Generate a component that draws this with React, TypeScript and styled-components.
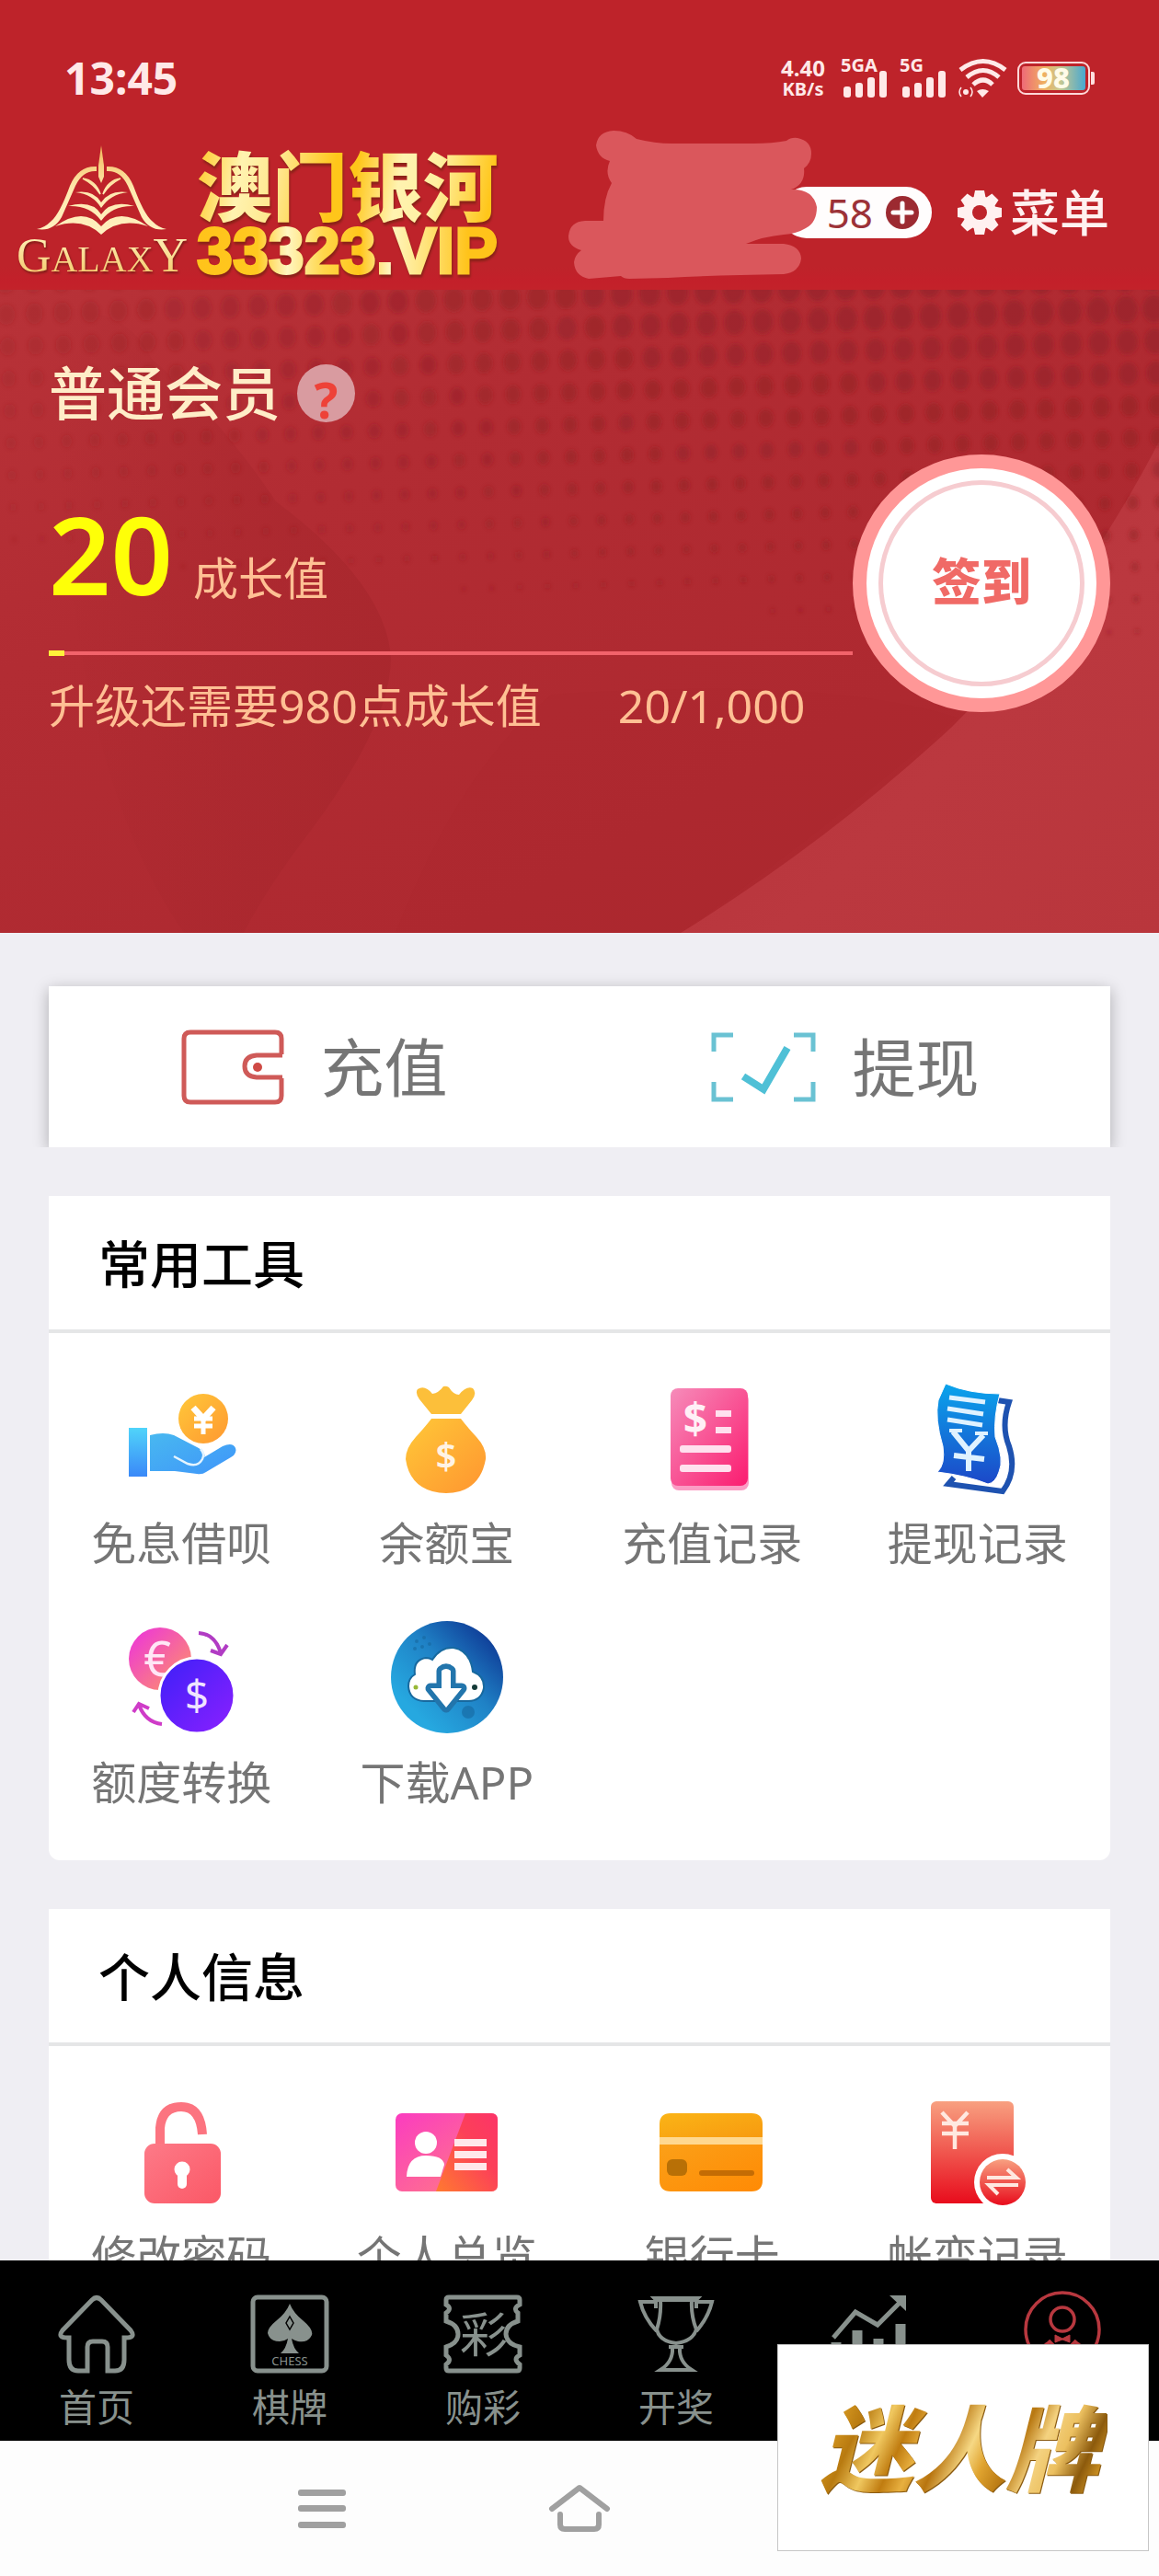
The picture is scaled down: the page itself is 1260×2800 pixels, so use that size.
import React from "react";
import styled, { createGlobalStyle } from "styled-components";

const GlobalStyle = createGlobalStyle`
  * { box-sizing: border-box; }
  body {
    margin: 0;
    background: #ffffff;
    font-family: "Noto Sans", "Noto Sans CJK SC", sans-serif;
  }
  button { font-family: inherit; border: 0; padding: 0; background: none; cursor: pointer; }
  a { text-decoration: none; color: inherit; }
  h2, p { margin: 0; }
  svg { display: block; flex: none; overflow: visible; }
`;

const Shell = styled.div`
  position: relative;
  display: flex;
  flex-direction: column;
  height: 100vh;
  overflow: hidden;
  background: #efeef3;
`;

const Top = styled.div`
  flex: none;
  background: linear-gradient(#be232a 0, #be232a 92%, #c3202a 97%, #c3222a 100%);
`;

const StatusBar = styled.div`
  display: flex;
  align-items: center;
  justify-content: space-between;
  height: 136px;
  padding: 34px 70px 0;
  color: #ffe9e8;
`;

const Clock = styled.time`
  font-size: 48px;
  line-height: 48px;
  font-weight: 700;
`;

const StatusIcons = styled.div`
  display: flex;
  align-items: center;
  gap: 12px;
`;

const NetSpeed = styled.div`
  display: flex;
  flex-direction: column;
  align-items: center;
  width: 58px;
  font-weight: 700;
  font-size: 24px;
  line-height: 24px;
  small { font-size: 20px; line-height: 22px; }
`;

const SignalBox = styled.div`
  display: flex;
  flex-direction: column;
  width: 52px;
  height: 42px;
  font-size: 20px;
  line-height: 14px;
  font-weight: 700;
  svg { margin-top: -2px; }
`;

const Header = styled.header`
  position: relative;
  display: flex;
  align-items: center;
  height: 179px;
  padding: 10px 54px 0 16px;
`;

const Brand = styled.a`
  display: flex;
  align-items: center;
  gap: 8px;
`;

const Emblem = styled.span`
  display: flex;
  flex-direction: column;
  align-items: center;
  width: 190px;
`;

const goldText = `
  color: transparent;
  -webkit-background-clip: text;
  background-clip: text;
`;

const Galaxy = styled.span`
  ${goldText}
  background-image: linear-gradient(#fff0b8, #f3c565);
  font-family: "Liberation Serif", serif;
  font-size: 40px;
  line-height: 44px;
  white-space: nowrap;
  filter: drop-shadow(1px 2px 1px #7a1c16);
  big { font-size: 52px; }
`;

const BrandText = styled.span`
  display: flex;
  flex-direction: column;
  padding-top: 4px;
  filter: drop-shadow(1px 3px 1px #8a2218);
`;

const BrandName = styled.span`
  ${goldText}
  background-image: linear-gradient(100deg, #ffc928 0, #fff3b0 15%, #ffe68a 28%, #ffc61a 45%, #ffc61a 52%, #fff3b0 66%, #fff0a0 78%, #ffc61a 96%);
  font-size: 82px;
  line-height: 80px;
  font-weight: 900;
`;

const BrandUrl = styled.span`
  ${goldText}
  -webkit-text-stroke: 3px transparent;
  background-image: linear-gradient(90deg, #ffc31a 0, #ffc820 20%, #fff6c0 30%, #ffd64a 42%, #ffc61a 54%, #fff6c0 64%, #ffe37a 76%, #ffc31a 90%);
  font-family: "Liberation Sans", sans-serif;
  font-size: 70px;
  line-height: 62px;
  font-weight: 700;
`;

const Spacer = styled.div`flex: 1;`;

const Balance = styled.div`
  display: flex;
  align-items: center;
  justify-content: flex-end;
  gap: 14px;
  width: 164px;
  height: 56px;
  padding-right: 14px;
  border-radius: 28px;
  background: #fffdfd;
  color: #9c3238;
  font-size: 44px;
  line-height: 56px;
`;

const RoundButton = styled.button`
  width: 36px;
  height: 36px;
`;

const Scribble = styled.svg`
  position: absolute;
  top: 0;
  right: 360px;
`;

const MenuButton = styled.button`
  display: flex;
  align-items: center;
  gap: 9px;
  margin-left: 28px;
  color: #fff1f0;
  font-size: 54px;
  line-height: 60px;
  font-weight: 500;
`;

const Hero = styled.section`
  position: relative;
  flex: none;
  display: flex;
  align-items: flex-start;
  padding: 0 53px 217px;
  background: #b02b31;
  overflow: hidden;
`;

const HeroArt = styled.svg`
  position: absolute;
  inset: 0;
  width: 100%;
  height: 100%;
`;

const Progress = styled.div`
  position: relative;
  flex: 1;
  padding-top: 76px;
`;

const Level = styled.div`
  display: flex;
  align-items: center;
  gap: 18px;
  height: 72px;
  color: #ffedc8;
  font-size: 63px;
  line-height: 72px;
  font-weight: 500;
`;

const Help = styled.button`
  width: 63px;
  height: 63px;
  border-radius: 50%;
  background: #d99ba0;
  color: #ee4238;
  font-size: 54px;
  line-height: 76px;
  font-weight: 700;
  overflow: hidden;
`;

const Score = styled.p`
  display: flex;
  align-items: baseline;
  gap: 22px;
  margin-top: 79px;
  height: 120px;
  color: #feff08;
  font-size: 118px;
  line-height: 120px;
  font-weight: 600;
  small { color: #ffc094; font-size: 49px; font-weight: 400; }
`;

const Track = styled.div`
  display: flex;
  align-items: center;
  height: 6px;
  margin-top: 45px;
  background: linear-gradient(transparent 1px, #f2636b 1px, #f2636b 5px, transparent 5px);
`;

const Fill = styled.div`
  height: 6px;
  background: #fff23a;
`;

const Hint = styled.p`
  display: flex;
  gap: 83px;
  margin-top: 24px;
  color: #ffc094;
  font-size: 50px;
  line-height: 60px;
`;

const SignIn = styled.button`
  position: relative;
  display: flex;
  align-items: center;
  justify-content: center;
  width: 280px;
  height: 280px;
  margin-top: 179px;
  border-radius: 50%;
  border: 15px solid #ff9797;
  background: #ffffff;
  color: #f06a66;
  font-size: 54px;
  font-weight: 900;
  span {
    display: flex;
    align-items: center;
    justify-content: center;
    width: 224px;
    height: 224px;
    border: 5px solid #f6ccd0;
    border-radius: 50%;
    line-height: 54px;
    padding-bottom: 4px;
  }
`;

const Content = styled.main`
  flex: 1;
  min-height: 0;
  overflow: hidden;
  display: flex;
  flex-direction: column;
  gap: 53px;
  padding: 58px 53px 0;
`;

const Quick = styled.div`
  flex: none;
  display: grid;
  grid-template-columns: 1fr 1fr;
  height: 175px;
  background: #ffffff;
  box-shadow: 0 4px 16px rgba(0, 0, 0, 0.28);
  clip-path: inset(-20px -20px 0 -20px);
`;

const QuickLink = styled.a`
  display: flex;
  align-items: center;
  justify-content: center;
  gap: 40px;
  color: #757575;
  font-size: 69px;
  line-height: 80px;
`;

const Card = styled.section`
  flex: none;
  background: #ffffff;
  border-radius: 0 0 12px 12px;
`;

const CardTitle = styled.h2`
  height: 149px;
  padding: 0 54px;
  border-bottom: 4px solid #e5e6e7;
  color: #000000;
  font-size: 56px;
  line-height: 147px;
  font-weight: 500;
`;

const Tools = styled.div`
  display: grid;
  grid-template-columns: repeat(4, 1fr);
  row-gap: 58px;
  padding: 53px 0 58px;
`;

const Tool = styled.a`
  display: flex;
  flex-direction: column;
  align-items: center;
  gap: 26px;
  color: #757575;
  font-size: 49px;
  line-height: 54px;
  white-space: nowrap;
`;

const TabBar = styled.nav`
  flex: none;
  display: grid;
  grid-template-columns: repeat(6, 1fr);
  height: 196px;
  padding-top: 38px;
  background: #000000;
`;

const Tab = styled.a<{ $active?: boolean }>`
  display: flex;
  flex-direction: column;
  align-items: center;
  gap: 14px;
  color: ${(p) => (p.$active ? "#b8383f" : "#88918d")};
  font-size: 41px;
  line-height: 46px;
`;

const SystemBar = styled.div`
  flex: none;
  display: grid;
  grid-template-columns: repeat(3, 280px);
  justify-content: center;
  justify-items: center;
  align-items: center;
  height: 147px;
  background: #fdfdfd;
  color: #a0a0a0;
`;

const SystemButton = styled.button`
  display: flex;
  color: inherit;
`;

const Stamp = styled.aside`
  position: absolute;
  right: 11px;
  bottom: 27px;
  display: flex;
  align-items: center;
  justify-content: center;
  width: 404px;
  height: 225px;
  border: 1px solid #c6c6c6;
  background: #ffffff;
`;

const StampText = styled.span`
  ${goldText}
  background-image: linear-gradient(115deg, #9a6408 0, #d89a22 8%, #b87a10 16%, #f0c860 24%, #c07c10 31%, #e8b040 37%, #b87510 44%, #f6d884 52%, #e0a430 58%, #b87812 66%, #f4d280 73%, #ecc060 80%, #8c5a0c 88%, #d09424 94%, #a56c0c 100%);
  padding: 0 8px 0 0;
  font-size: 101px;
  line-height: 120px;
  font-weight: 900;
  font-style: italic;
  filter: drop-shadow(1px 1px 0 #8a5a10);
`;

/* ---------- status icons ---------- */

const Signal = ({ label }: { label: string }) => (
  <SignalBox>
    {label}
    <svg width="52" height="30" viewBox="0 0 52 30" fill="currentColor">
      <rect x="3" y="18" width="8" height="12" rx="3" />
      <rect x="16" y="14" width="8" height="16" rx="3" />
      <rect x="29" y="8" width="8" height="22" rx="3" />
      <rect x="42" y="1" width="8" height="29" rx="3" />
    </svg>
  </SignalBox>
);

const Wifi = () => (
  <svg width="52" height="42" viewBox="0 0 52 42" fill="none" stroke="currentColor" strokeWidth="5">
    <path d="M2 12 Q27 -7 51 12" />
    <path d="M9 20 Q27 5 44 20" />
    <path d="M16 28 Q27 18 37 28" />
    <path d="M20 35 Q26 31 33 35 L26 42Z" fill="currentColor" stroke="none" />
    <circle cx="8" cy="36" r="3" fill="currentColor" stroke="none" />
    <path d="M3 31 Q-1 36 3 41 M13 31 Q17 36 13 41" strokeWidth="1.5" />
  </svg>
);

const Battery = () => (
  <svg width="84" height="36" viewBox="0 0 84 36">
    <defs>
      <linearGradient id="bat">
        <stop offset="0" stopColor="#ee6a78" />
        <stop offset=".35" stopColor="#f0b060" />
        <stop offset=".6" stopColor="#c8c890" />
        <stop offset="1" stopColor="#48a8d0" />
      </linearGradient>
    </defs>
    <rect x="1" y="1" width="77" height="34" rx="8" fill="none" stroke="#ffd8d8" strokeWidth="2" />
    <rect x="5" y="5" width="69" height="26" rx="3" fill="url(#bat)" />
    <path d="M80 11h2q2 0 2 2v10q0 2-2 2h-2z" fill="#ffe0e0" />
    <text x="39" y="29" textAnchor="middle" fontSize="31" fontWeight="800" fill="#fffbe8">98</text>
  </svg>
);

/* ---------- header drawings ---------- */

const Sail = () => (
  <svg width="142" height="98" viewBox="0 0 142 98">
    <defs>
      <linearGradient id="sail" gradientUnits="userSpaceOnUse" x1="0" y1="0" x2="0" y2="98">
        <stop offset="0" stopColor="#f2b95a" />
        <stop offset=".5" stopColor="#ffeab0" />
        <stop offset="1" stopColor="#fff0c0" />
      </linearGradient>
    </defs>
    <g fill="url(#sail)">
      <path d="M70 0 L73 22 L73 34 L70 41 L67 34 L67 22Z" />
      <path d="M65 23 Q45 22 36 44 Q25 74 16 82 Q8 90 0 91 Q18 94 27 78 Q35 60 42 44 Q50 27 65 28Z" />
      <path d="M76 23 Q96 22 105 44 Q116 74 125 82 Q133 90 141 91 Q123 94 114 78 Q106 60 99 44 Q91 27 76 28Z" />
      <path d="M50 36 Q64 38 69 53 Q62 42 50 36Z M91 36 Q77 38 72 53 Q79 42 91 36Z" stroke="url(#sail)" strokeWidth="1.5" />
      <path d="M42 51 Q62 48 70 62 Q79 48 99 51 Q80 53 70 68 Q61 53 42 51Z" />
      <path d="M34 66 Q60 59 70 75 Q81 59 106 66 Q82 65 70 82 Q58 65 34 66Z" />
      <path d="M20 88 Q51 66 70 88 Q89 66 121 88 Q90 78 70 97 Q50 78 20 88Z" />
    </g>
  </svg>
);

const Gear = () => (
  <svg width="48" height="48" viewBox="-24 -24 48 48" fill="currentColor">
    {[0, 45, 90, 135].map((a) => (
      <path key={a} d="M-5 -24 H5 L7 -14 V14 L5 24 H-5 L-7 14 V-14Z" transform={`rotate(${a})`} />
    ))}
    <circle r="18" />
    <circle r="8" fill="#be232a" />
  </svg>
);

/* ---------- hero backdrop ---------- */

const dots = (() => {
  const out: { x: number; y: number; r: number; o: number }[] = [];
  for (let row = -1; row < 13; row++) {
    for (let col = 0; col < 43; col++) {
      const x = 7 + col * 30.4 + row * 1.2;
      const y = 27 + row * 35 - x * 0.033;
      const k = x / 1260;
      const t = Math.max(0, y / (290 + 90 * k));
      const r = 2 + (8 + 3 * k) * (1 - t);
      if (r > 2) out.push({ x, y, r, o: 0.24 + 0.3 * Math.min(1, k * 1.8) - 0.1 * t });
    }
  }
  return out;
})();

const Backdrop = () => (
  <HeroArt viewBox="0 0 1260 699" preserveAspectRatio="none">
    <defs>
      <linearGradient id="hb" x1="0" y1="0" x2="1" y2="1">
        <stop offset="0" stopColor="#b83238" />
        <stop offset=".3" stopColor="#b22c33" />
        <stop offset=".7" stopColor="#ae2930" />
        <stop offset="1" stopColor="#aa282e" />
      </linearGradient>
      <linearGradient id="lobe" x1="0" y1="0" x2="1" y2="0">
        <stop offset="0" stopColor="#a6262c" stopOpacity="0" />
        <stop offset="1" stopColor="#a6262c" />
      </linearGradient>
      <linearGradient id="corner" x1="0" y1="0" x2="1" y2="1">
        <stop offset="0" stopColor="#b22f36" />
        <stop offset=".6" stopColor="#bb383f" />
        <stop offset="1" stopColor="#b9363c" />
      </linearGradient>
      <filter id="soft"><feGaussianBlur stdDeviation="2" /></filter>
    </defs>
    <rect width="1260" height="699" fill="url(#hb)" />
    <path d="M60 20 Q140 20 165 75 Q240 140 300 230 Q420 320 425 400 Q425 470 340 585 Q290 650 265 699 H200 Q60 500 60 20Z" fill="url(#lobe)" opacity=".7" />
    <path d="M600 440 Q900 420 1040 465 Q900 585 740 699 H430 Q500 520 600 440Z" fill="#a8272d" opacity=".2" />
    <path d="M740 699 Q900 600 1035 475 Q1170 340 1260 165 V699Z" fill="url(#corner)" />
    <g fill="#8f2026" filter="url(#soft)">
      {dots.map((d, i) => (
        <ellipse key={i} cx={d.x} cy={d.y} rx={d.r} ry={d.r * 1.2} opacity={d.o} />
      ))}
    </g>
  </HeroArt>
);

/* ---------- quick actions ---------- */

const Wallet = () => (
  <svg width="112" height="82" viewBox="0 0 112 82" fill="none" stroke="#cf5a58" strokeWidth="5">
    <path d="M109 27 V10 Q109 3 102 3 H10 Q3 3 3 10 V72 Q3 79 10 79 H102 Q109 79 109 72 V53" />
    <path d="M110 28 H82 Q69 29 69 40 Q69 51 82 52 H110" />
    <circle cx="83" cy="41" r="5" fill="#cf4a45" stroke="none" />
  </svg>
);

const ScanCheck = () => (
  <svg width="114" height="76" viewBox="0 0 114 76" fill="none" stroke="#6ac2d3" strokeWidth="5">
    <path d="M24 3H3V21M90 3H111V21M3 54V73H24M111 54V73H90" />
    <path d="M35 48 L57 62 L83 17" stroke="#4fc0d6" strokeWidth="8" />
  </svg>
);

/* ---------- tool icons ---------- */

const Grad = ({ id, a, b, v }: { id: string; a: string; b: string; v?: boolean }) => (
  <linearGradient id={id} x1="0" y1="0" x2={v ? "0" : "1"} y2="1">
    <stop offset="0" stopColor={a} />
    <stop offset="1" stopColor={b} />
  </linearGradient>
);

const Icon = ({ children }: { children: React.ReactNode }) => (
  <svg width="122" height="122" viewBox="0 0 122 122">{children}</svg>
);

const Loan = () => (
  <Icon>
    <defs><Grad id="l1" a="#ffc83a" b="#ff9830" /><Grad id="l2" a="#50d4fa" b="#3a88f8" v /><Grad id="l3" a="#48b8f0" b="#3f95fa" /></defs>
    <circle cx="85" cy="40" r="27" fill="url(#l1)" />
    <g stroke="#ffffff" strokeWidth="5" fill="none">
      <path d="M74 28 L85 40 L96 28" strokeWidth="7" /><path d="M75 40H95M75 48H95M85 38V57" />
    </g>
    <rect x="4" y="50" width="20" height="53" fill="url(#l2)" />
    <path d="M27 58 Q42 54 53 58 L80 72 Q88 77 86 82 L106 70 Q117 65 120 72 Q122 78 115 82 L88 98 Q84 101 78 100 L54 97 H27Z" fill="url(#l3)" />
    <path d="M53 81 L68 89 Q79 93 84 84 Q87 78 82 73" fill="none" stroke="#e4f4ff" strokeWidth="2.5" />
  </Icon>
);

const MoneyBag = () => (
  <Icon>
    <defs><Grad id="m1" a="#ffc838" b="#ff9530" /></defs>
    <path d="M29 8 Q37 3 45 13 Q52 12 57 5 Q60 4 63 6 Q68 14 74 14 Q82 4 89 7 Q94 12 88 20 L76 35 H44 L31 19 Q26 12 29 8Z" fill="#fcbf3a" />
    <path d="M44 40 H76 Q82 48 93 60 Q104 72 103 84 Q98 112 75 119 Q60 123 45 119 Q20 112 16 84 Q16 72 27 60 Q38 48 44 40Z" fill="url(#m1)" />
    <text x="60" y="95" textAnchor="middle" fontSize="40" fontWeight="600" fill="#fff3e4">$</text>
  </Icon>
);

const Receipt = () => (
  <Icon>
    <defs><Grad id="r1" a="#f68cba" b="#fb1c70" /></defs>
    <rect x="17" y="12" width="84" height="106" rx="8" fill="#fb9cc4" />
    <rect x="16" y="7" width="84" height="106" rx="8" fill="url(#r1)" />
    <text x="43" y="57" textAnchor="middle" fontSize="46" fontWeight="700" fill="#fff0f6">$</text>
    <g fill="#ffe0ee">
      <rect x="65" y="31" width="17" height="7" /><rect x="65" y="49" width="17" height="7" />
      <rect x="26" y="69" width="56" height="8" rx="3" /><rect x="26" y="90" width="56" height="8" rx="3" />
    </g>
  </Icon>
);

const Bills = () => (
  <Icon>
    <defs><Grad id="b1" a="#0aa4ec" b="#1c48c8" v /></defs>
    <path d="M82 20 L95 22 Q86 48 95 70 Q104 98 88 119 L29 111 L35 104" fill="#ffffff" stroke="#1e52b0" strokeWidth="6" />
    <path d="M26 2 Q52 13 85 13 Q78 38 80 60 Q90 85 84 98 Q80 110 72 111 Q50 102 17 98 Q26 90 23 70 Q14 40 18 20Z" fill="url(#b1)" stroke="#ffffff" strokeWidth="1" />
    <g stroke="#dff2ff" strokeWidth="5" fill="none">
      <path d="M30 17 L69 22M28 29 L67 35M28 41 L66 47" />
      <path d="M34 54 L51 75 L67 58M51 73 V97M35 80 L68 84" strokeWidth="6" />
      <path d="M30 53 H44M58 56 H72" strokeWidth="4" />
    </g>
  </Icon>
);

const Exchange = () => (
  <Icon>
    <defs><Grad id="e1" a="#ec30e0" b="#ff9a60" /><Grad id="e2" a="#3c20f8" b="#8c20ff" /></defs>
    <circle cx="38" cy="41" r="34" fill="url(#e1)" />
    <text x="35" y="60" textAnchor="middle" fontSize="52" fill="#ffe6f6">€</text>
    <circle cx="78" cy="81" r="41" fill="url(#e2)" stroke="#ffffff" strokeWidth="3" />
    <text x="78" y="97" textAnchor="middle" fontSize="46" fill="#f0e4ff">$</text>
    <g fill="none" stroke="#b13cc4" strokeWidth="4">
      <path d="M80 13 Q98 14 104 35M93 32 L104 36 L111 26" />
      <path d="M40 112 Q22 110 15 91M9 99 L15 90 L26 95" stroke="#cf3cc8" />
    </g>
  </Icon>
);

const Download = () => (
  <Icon>
    <defs><linearGradient id="d1" x1="1" y1="0" x2="0" y2="1">
      <stop offset=".1" stopColor="#0e3894" /><stop offset=".45" stopColor="#1f82c6" /><stop offset=".8" stopColor="#26a8e0" />
    </linearGradient></defs>
    <circle cx="61" cy="61" r="61" fill="url(#d1)" />
    <g fill="#1668a0" opacity=".6">
      <circle cx="28" cy="22" r="2" /><circle cx="36" cy="18" r="2" /><circle cx="34" cy="28" r="2" /><circle cx="42" cy="25" r="2" /><circle cx="26" cy="30" r="2" />
      <circle cx="84" cy="99" r="7" />
    </g>
    <path d="M36 87 Q20 86 19 71 Q19 62 26 58 Q24 42 38 40 Q42 40 45 42 Q54 28 68 29 Q86 32 89 55 Q102 60 101 73 Q98 87 84 87Z" fill="#ffffff" stroke="#17699f" strokeWidth="2" />
    <path d="M55 54 Q60 50 65 54 V73 H77 L60 94 L43 73 H55Z" fill="none" stroke="#2275ac" strokeWidth="11" strokeLinejoin="round" />
    <path d="M55 54 Q60 50 65 54 V73 H77 L60 94 L43 73 H55Z" fill="#ffffff" />
    <circle cx="27" cy="72" r="2.5" fill="#98b838" /><circle cx="91" cy="72" r="3" fill="#143a38" />
  </Icon>
);

const Lock = () => (
  <Icon>
    <defs><Grad id="k1" a="#fd7a88" b="#fb5866" /></defs>
    <path d="M38 58 V36 Q40 13 61 13 Q82 13 84 43" fill="none" stroke="#fc7480" strokeWidth="10" />
    <rect x="21" y="53" width="83" height="65" rx="11" fill="url(#k1)" />
    <circle cx="62" cy="81" r="8.5" fill="#ffffff" /><rect x="57" y="82" width="10" height="20" rx="5" fill="#ffffff" />
  </Icon>
);

const IdCard = () => (
  <Icon>
    <defs>
      <Grad id="i1" a="#fb3cc0" b="#ff8080" />
      <linearGradient id="i2" x1="0" y1="1" x2="1" y2="0"><stop offset="0" stopColor="#ff7a30" /><stop offset=".6" stopColor="#fc4058" /><stop offset="1" stopColor="#fc3468" /></linearGradient>
    </defs>
    <rect x="5" y="20" width="111" height="85" rx="7" fill="url(#i1)" />
    <path d="M81 20 H109 Q116 20 116 27 V98 Q116 105 109 105 H49Z" fill="url(#i2)" />
    <circle cx="38" cy="52" r="12" fill="#ffffff" />
    <path d="M17 89 Q18 66 38 66 Q57 66 58 76 L54 89Z" fill="#ffffff" />
    <path d="M69 52H104M69 65H104M69 78H104" stroke="#ffe8ea" strokeWidth="8" />
  </Icon>
);

const BankCard = () => (
  <Icon>
    <defs><Grad id="c1" a="#fbb416" b="#f79a10" /><Grad id="c2" a="#fba018" b="#ff8a04" /></defs>
    <path d="M4 47 V32 Q4 20 16 20 H104 Q116 20 116 32 V47Z" fill="url(#c1)" />
    <rect x="4" y="46" width="112" height="8" fill="#ffd890" />
    <path d="M4 54 H116 V93 Q116 105 104 105 H16 Q4 105 4 93Z" fill="url(#c2)" />
    <rect x="12" y="70" width="22" height="18" rx="6" fill="#b87006" /><rect x="47" y="82" width="60" height="6" rx="3" fill="#c46c04" />
  </Icon>
);

const Ledger = () => (
  <Icon>
    <defs><Grad id="g1" a="#f8a080" b="#e80c1c" v /></defs>
    <rect x="10" y="7" width="90" height="111" rx="6" fill="url(#g1)" />
    <path d="M22 19 L36 34 L50 19M36 32V59M22 31H51M22 42H51" fill="none" stroke="#ffe8e0" strokeWidth="4.5" />
    <circle cx="88" cy="95" r="31" fill="#ffffff" />
    <circle cx="88" cy="95" r="25" fill="url(#g1)" />
    <path d="M71 90H103L93 81M105 98H73L83 108" fill="none" stroke="#ffe8e0" strokeWidth="4" />
  </Icon>
);

/* ---------- tab icons ---------- */

const TabIcon = ({ children }: { children: React.ReactNode }) => (
  <svg width="84" height="84" viewBox="0 0 84 84" fill="none" stroke="currentColor" strokeWidth="5">{children}</svg>
);

const HomeTab = () => (
  <TabIcon>
    <path d="M37 5 Q42 0 47 5 L79 38 Q85 46 74 46 H72 V70 Q72 82 62 82 H54 V56 Q54 50 48 50 H38 Q32 50 32 56 V82 H22 Q12 82 12 70 V46 H10 Q-1 46 5 38Z" />
  </TabIcon>
);

const ChessTab = () => (
  <TabIcon>
    <rect x="2" y="2" width="80" height="80" rx="5" />
    <g fill="currentColor" stroke="none">
      <path d="M42 9 Q46 19 56 27 Q68 37 66 43 Q62 52 51 50 Q47 49 44 47 Q46 58 52 63 H32 Q38 58 40 47 Q36 50 31 50 Q20 50 18 41 Q18 35 28 27 Q38 19 42 9Z" />
      <text x="42" y="76" textAnchor="middle" fontSize="13">CHESS</text>
    </g>
    <path d="M42 23 L46 30 L42 37 L38 30Z" stroke="#000000" strokeWidth="1.5" />
  </TabIcon>
);

const TicketTab = () => (
  <TabIcon>
    <path d="M5 2 H79 Q82 2 82 5 V10 Q74 14 80 19 V28 Q67 32 67 42 Q68 53 82 56 V65 Q74 69 82 75 V79 Q82 82 79 82 H5 Q2 82 2 79 V75 Q9 70 2 65 V56 Q15 52 15 42 Q15 32 2 28 V19 Q9 14 2 10 V5 Q2 2 5 2Z" />
    <text x="43" y="62" textAnchor="middle" fontSize="52" fill="currentColor" stroke="none">彩</text>
  </TabIcon>
);

const TrophyTab = () => (
  <TabIcon>
    <path d="M16 2 H68 L64 6 H20Z" fill="currentColor" strokeWidth="2" />
    <path d="M25 5 Q26 22 21 37 Q24 50 42 52 Q60 50 64 37 Q58 22 59 5" strokeWidth="4" />
    <path d="M22 7 H3 Q7 24 21 39M62 7H81 Q77 24 64 39M20 6 V14M64 6 V14" strokeWidth="4" />
    <path d="M34 56 H50M38 57 Q39 72 25 81 H59 Q45 72 46 57" strokeWidth="4" />
  </TabIcon>
);

const TrendTab = () => (
  <TabIcon>
    <path d="M3 46 L27 18 L51 32 L75 8" strokeWidth="5" />
    <path d="M64 0 H82 V17Z" fill="currentColor" stroke="none" />
    <path d="M6 84V51M29 84V38M52 84V47M76 84V31" strokeWidth="11" />
  </TabIcon>
);

const MeTab = () => (
  <TabIcon>
    <g strokeWidth="3.5">
      <circle cx="42" cy="37" r="40" />
      <circle cx="42" cy="26" r="13" />
      <path d="M34 43 L42 47 L50 43 V51 L42 48 L34 51Z" fill="currentColor" strokeWidth="1" />
      <path d="M29 50 Q18 56 17 66M55 50 Q66 56 67 66" />
      <path d="M27 49 L35 57M57 49 L49 57" />
    </g>
  </TabIcon>
);

const tools = [
  { label: "免息借呗", Art: Loan },
  { label: "余额宝", Art: MoneyBag },
  { label: "充值记录", Art: Receipt },
  { label: "提现记录", Art: Bills },
  { label: "额度转换", Art: Exchange },
  { label: "下载APP", Art: Download },
];

const personal = [
  { label: "修改密码", Art: Lock },
  { label: "个人总览", Art: IdCard },
  { label: "银行卡", Art: BankCard },
  { label: "帐变记录", Art: Ledger },
];

const tabs: { label?: string; Art: React.FC; active?: boolean }[] = [
  { label: "首页", Art: HomeTab },
  { label: "棋牌", Art: ChessTab },
  { label: "购彩", Art: TicketTab },
  { label: "开奖", Art: TrophyTab },
  { Art: TrendTab },
  { Art: MeTab, active: true },
];

const ToolCard = ({ title, items }: { title: string; items: typeof tools }) => (
  <Card>
    <CardTitle>{title}</CardTitle>
    <Tools>
      {items.map(({ label, Art }) => (
        <Tool href="#" key={label}><Art />{label}</Tool>
      ))}
    </Tools>
  </Card>
);

export default function App() {
  const points = 20;
  const target = 1000;
  return (
    <Shell>
      <GlobalStyle />
      <Top>
        <StatusBar>
          <Clock>13:45</Clock>
          <StatusIcons>
            <NetSpeed>4.40<small>KB/s</small></NetSpeed>
            <Signal label="5GA" />
            <Signal label="5G" />
            <Wifi />
            <Battery />
          </StatusIcons>
        </StatusBar>
        <Header>
          <Brand href="#">
            <Emblem>
              <Sail />
              <Galaxy><big>G</big>ALAX<big>Y</big></Galaxy>
            </Emblem>
            <BrandText>
              <BrandName>澳门银河</BrandName>
              <BrandUrl>33323.VIP</BrandUrl>
            </BrandText>
          </Brand>
          <Spacer />
          <Balance>
            58
            <RoundButton>
              <svg width="36" height="36" viewBox="0 0 36 36">
                <circle cx="18" cy="18" r="18" fill="#9c2a31" />
                <path d="M18 8V28M8 18H28" stroke="#fffdfd" strokeWidth="5" strokeLinecap="round" />
              </svg>
            </RoundButton>
          </Balance>
          <MenuButton><Gear />菜单</MenuButton>
          <Scribble width="284" height="170" viewBox="616 136 284 170">
            <path
              d="M648 158 Q650 143 667 142 Q682 142 692 151 Q712 156 730 156 H819 Q840 156 855 153 Q860 149 867 150 Q882 153 882 167 Q882 177 874 183 Q876 200 860 206 Q884 205 888 225 Q888 242 876 248 Q866 254 852 255 Q830 257 811 265 H852 Q870 267 871 281 Q869 296 852 298 Q780 299 726 302 L684 303 Q678 303 675 300 L640 303 Q625 300 624 285 Q625 277 632 272 Q618 268 618 257 Q619 241 636 240 H656 Q656 215 665 199 Q657 188 663 175 Q650 172 648 158Z"
              fill="#da575c"
            />
          </Scribble>
        </Header>
      </Top>

      <Hero>
        <Backdrop />
        <Progress>
          <Level>普通会员<Help>?</Help></Level>
          <Score>{points}<small>成长值</small></Score>
          <Track><Fill style={{ width: `${(points / target) * 100}%` }} /></Track>
          <Hint><span>升级还需要{target - points}点成长值</span><span>20/1,000</span></Hint>
        </Progress>
        <SignIn><span>签到</span></SignIn>
      </Hero>

      <Content>
        <Quick>
          <QuickLink href="#"><Wallet />充值</QuickLink>
          <QuickLink href="#"><ScanCheck />提现</QuickLink>
        </Quick>
        <ToolCard title="常用工具" items={tools} />
        <ToolCard title="个人信息" items={personal} />
      </Content>

      <TabBar>
        {tabs.map(({ label, Art, active }, i) => (
          <Tab href="#" key={i} $active={active}><Art />{label}</Tab>
        ))}
      </TabBar>
      <SystemBar>
        <SystemButton>
          <svg width="52" height="42" viewBox="0 0 52 42" fill="currentColor">
            <rect width="52" height="7" rx="3" /><rect y="17" width="52" height="7" rx="3" /><rect y="35" width="52" height="7" rx="3" />
          </svg>
        </SystemButton>
        <SystemButton>
          <svg width="68" height="52" viewBox="0 0 68 52" fill="none" stroke="currentColor" strokeWidth="6" strokeLinecap="round" strokeLinejoin="round">
            <path d="M4 26 L34 3 L64 26M13 32 V43 Q13 48 18 48 H50 Q55 48 55 43 V32" />
          </svg>
        </SystemButton>
      </SystemBar>
      <Stamp><StampText>迷人牌</StampText></Stamp>
    </Shell>
  );
}
